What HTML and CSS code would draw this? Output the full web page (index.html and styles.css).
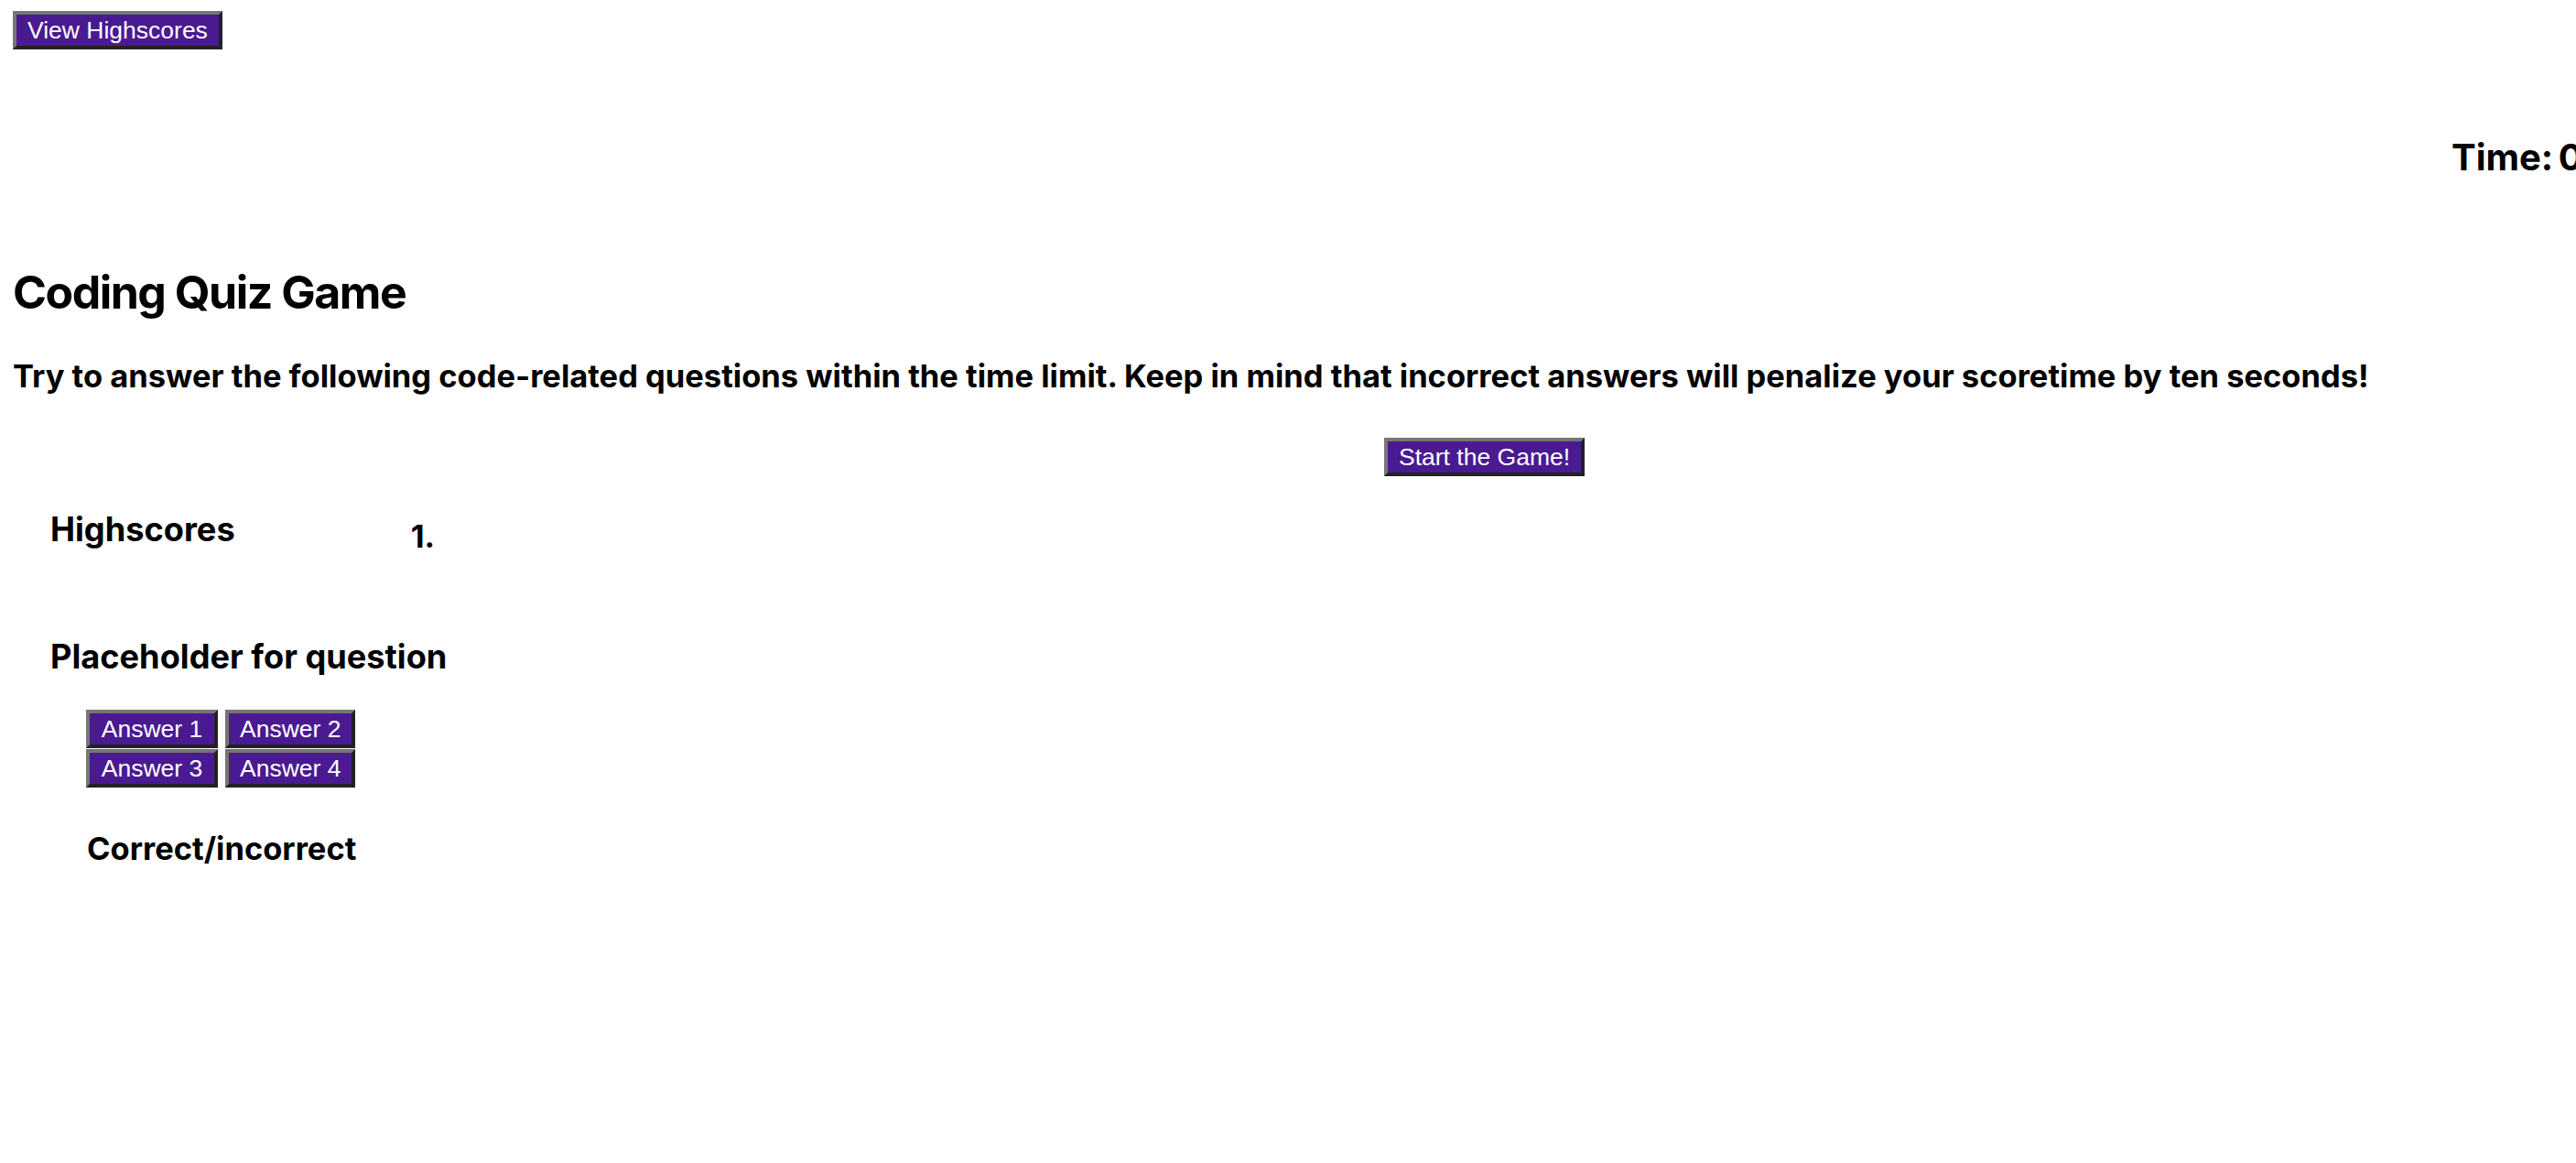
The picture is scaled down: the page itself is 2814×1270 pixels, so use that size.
FILE: index.html
```html
<!DOCTYPE html>
<html lang="en">
<head>
<meta charset="utf-8">
<title>Coding Quiz Game</title>
<link rel="stylesheet" href="styles.css">
</head>
<body>
<div class="page">
  <header class="top">
    <button class="btn">View Highscores</button>
  </header>
  <div class="timer">Time: 0</div>
  <h1 class="title">Coding Quiz Game</h1>
  <h3 class="intro">Try to answer the following code-related questions within the time limit. Keep in mind that incorrect answers will penalize your scoretime by ten seconds!</h3>
  <div class="start-row">
    <button class="btn">Start the Game!</button>
  </div>
  <section class="scores">
    <h3 class="h3 section-title">Highscores</h3>
    <div class="score-list">1.</div>
  </section>
  <section class="quiz">
    <h3 class="h3 section-title">Placeholder for question</h3>
    <div class="answers">
      <button class="btn">Answer 1</button>
      <button class="btn">Answer 2</button>
      <button class="btn">Answer 3</button>
      <button class="btn">Answer 4</button>
    </div>
    <h3 class="h3 result">Correct/incorrect</h3>
  </section>
</div>
</body>
</html>
```
FILE: styles.css
```css
html, body {
  margin: 0;
  padding: 0;
  background: #ffffff;
  overflow: hidden;
}
body {
  font-family: Inter, "Noto Sans", sans-serif;
  color: #000;
}
.page {
  padding-left: 14px;
  display: flex;
  flex-direction: column;
  align-items: flex-start;
}
.btn {
  font-family: "Liberation Sans", Arial, sans-serif;
  font-size: 26.5px;
  line-height: 30px;
  color: #ffffff;
  background: #4a1a91;
  border-style: solid;
  border-width: 4px;
  border-color: #767676 #222222 #222222 #767676;
  padding: 2px 12px;
  margin: 0;
  cursor: pointer;
  white-space: nowrap;
}
.top {
  margin-top: 12px;
}
.timer {
  margin-top: 97.5px;
  padding-left: 2664px;
  font-size: 40px;
  line-height: 40px;
  font-weight: 700;
  white-space: nowrap;
  word-spacing: -4px;
}
.title {
  margin: 102.5px 0 0 0;
  font-size: 50px;
  line-height: 50px;
  font-weight: 700;
  letter-spacing: -1.5px;
}
.intro {
  margin: 50px 0 0 0;
  font-size: 34.5px;
  line-height: 34.5px;
  font-weight: 700;
  white-space: nowrap;
}
.start-row {
  margin-top: 49.5px;
  padding-left: 1498px;
}
.h3 {
  margin: 0;
  font-size: 34.5px;
  line-height: 34.5px;
  font-weight: 700;
  white-space: nowrap;
}
.section-title {
  font-size: 36.2px;
  line-height: 36.2px;
}
.scores {
  margin-top: 40px;
  padding-left: 41px;
  display: flex;
  align-items: flex-start;
}
.score-list {
  margin-left: 192px;
  margin-top: 9px;
  margin-bottom: -9px;
  font-size: 34.5px;
  line-height: 34.5px;
  font-weight: 700;
}
.quiz {
  margin-top: 102.5px;
  padding-left: 41px;
  display: flex;
  flex-direction: column;
  align-items: flex-start;
}
.answers {
  margin-top: 40px;
  margin-left: 39px;
  display: grid;
  grid-template-columns: 144px 142px;
  column-gap: 8px;
  row-gap: 1px;
}
.answers .btn {
  width: 100%;
}
.result {
  margin-top: 50px;
  margin-left: 40px;
}
```
